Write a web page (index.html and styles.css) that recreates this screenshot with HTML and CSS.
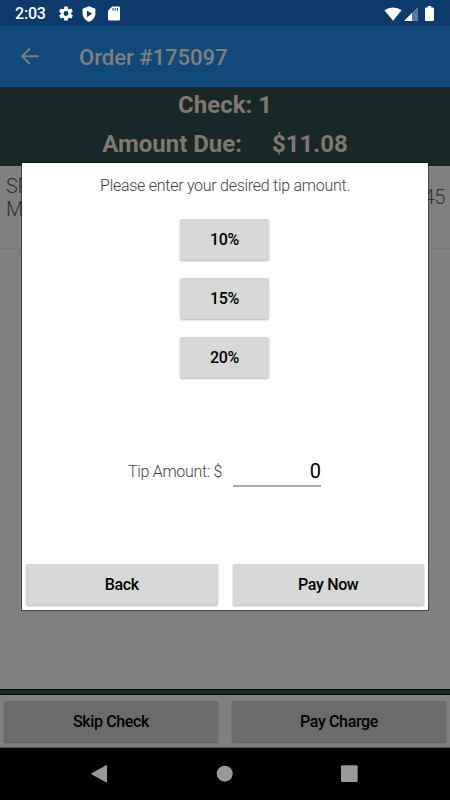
FILE: index.html
```html
<!DOCTYPE html>
<html lang="en">
<head>
<meta charset="utf-8">
<title>Order #175097</title>
<link rel="stylesheet" href="styles.css">
</head>
<body>
<div class="screen">
  <header class="status">
    <span class="clock">2:03</span>
    <svg class="gear" width="14" height="15" viewBox="2 2 20 20"><path fill="#fff" d="M19.43 12.98c.04-.32.07-.64.07-.98s-.03-.66-.07-.98l2.11-1.65c.19-.15.24-.42.12-.64l-2-3.46c-.12-.22-.39-.3-.61-.22l-2.49 1c-.52-.4-1.08-.73-1.69-.98l-.38-2.65C14.46 2.18 14.25 2 14 2h-4c-.25 0-.46.18-.49.42l-.38 2.65c-.61.25-1.17.59-1.69.98l-2.49-1c-.23-.09-.49 0-.61.22l-2 3.46c-.13.22-.07.49.12.64l2.11 1.65c-.04.32-.07.65-.07.98s.03.66.07.98l-2.11 1.65c-.19.15-.24.42-.12.64l2 3.46c.12.22.39.3.61.22l2.49-1c.52.4 1.08.73 1.69.98l.38 2.65c.03.24.24.42.49.42h4c.25 0 .46-.18.49-.42l.38-2.65c.61-.25 1.17-.59 1.69-.98l2.49 1c.23.09.49 0 .61-.22l2-3.46c.12-.22.07-.49-.12-.64zM12 15.500a3.500 3.500 0 1 1 0-7 3.500 3.500 0 0 1 0 7z"/></svg>
    <svg class="shield" width="14" height="16" viewBox="0 0 14 16"><path fill="#fff" fill-rule="evenodd" d="M7 .3 13.4 2.8V7.5C13.4 11.300 10.700 14.500 7 15.700 3.300 14.500.600 11.300.600 7.500V2.800zM5 4.700V11L10.200 7.850z"/></svg>
    <svg class="sd" width="12" height="15" viewBox="0 0 12 15"><path fill="#fff" d="M4.200.500H10.800Q12 .500 12 1.700V13.300Q12 14.500 10.800 14.500H1.200Q0 14.500 0 13.300V4.700z"/><path stroke="#0b3a6b" stroke-width="1" d="M5 2V4.600M7.200 2V4.600M9.400 2V4.600"/></svg>
    <span class="grow"></span>
    <svg class="wifi" width="18" height="14" viewBox="0 0 18 14"><path fill="#fff" d="M.400 3.300Q4 .400 9 .400T17.600 3.300L9 13.700z"/></svg>
    <svg class="signal" width="14" height="14" viewBox="0 0 14 14"><path fill="#58799b" d="M14 0V14H0z"/><path fill="#fff" d="M8 6V14H0z"/></svg>
    <svg class="battery" width="9" height="15" viewBox="0 0 9 15"><path fill="#fff" d="M2.700 0H6.300V1.400H8Q9 1.400 9 2.400V14Q9 15 8 15H1Q0 15 0 14V2.400Q0 1.400 1 1.400H2.700z"/></svg>
  </header>
  <div class="toolbar">
    <svg width="19" height="18" viewBox="-.7 -.3 19 18"><path fill="none" stroke="#808080" stroke-width="1.900" d="M17.800 9H2M9.300 1.100 1.400 9 9.300 16.900"/></svg>
    <h1>Order #175097</h1>
  </div>
  <div class="summary">
    <div class="check">Check: 1</div>
    <div class="due"><span>Amount Due:</span><span>$11.08</span></div>
  </div>
  <main class="list">
    <div class="item"><div>SP<br>M</div><div class="price">45</div></div>
  </main>
  <div class="rule"></div>
  <footer class="actions"><button>Skip Check</button><button>Pay Charge</button></footer>
  <nav class="nav">
    <svg width="450" height="52" viewBox="0 0 450 52"><g fill="#999"><path d="M105.500 17.500Q107 16.700 107 18.200V33.500Q107 34.900 105.500 34L91.800 26.500Q91 25.800 91.800 25.200z"/><circle cx="224.700" cy="25.700" r="8"/><rect x="341" y="17.300" width="16.700" height="16.700" rx="1.200"/></g></svg>
  </nav>
  <section class="dialog">
    <p class="prompt">Please enter your desired tip amount.</p>
    <div class="tips"><button>10%</button><button>15%</button><button>20%</button></div>
    <div class="tip-row"><span>Tip Amount: $</span><span class="field">0</span></div>
    <div class="choices"><button>Back</button><button>Pay Now</button></div>
  </section>
</div>
</body>
</html>
```
FILE: styles.css
```css
* { box-sizing: border-box; }
body { margin: 0; font-family: Roboto, "Liberation Sans", sans-serif; }
.screen { position: relative; width: 450px; height: 800px; overflow: hidden; display: flex; flex-direction: column; background: #808080; }
svg { display: block; flex: none; }
.status { height: 26px; flex: none; display: flex; align-items: center; padding: 1px 16px 0 15px; background: #0b3a6b; color: #fff; }
.clock { width: 43px; font-size: 16px; font-weight: 500; line-height: 26px; letter-spacing: -.2px; }
.gear { margin-left: 1px; }
.shield { margin-left: 9px; }
.sd { margin-left: 12px; }
.grow { flex: 1; }
.wifi { margin-right: 1px; }
.signal { margin: 0 7px 0 1px; }
.toolbar { height: 62px; flex: none; display: flex; align-items: center; padding: 0 0 1px 20px; background: #114a78; border-bottom: 1px solid #182727; color: #808080; }
.toolbar h1 { margin: 3px 0 0 40px; font-size: 22px; font-weight: 500; line-height: 28px; }
.summary { height: 78px; flex: none; background: #182727; color: #80776e; font-size: 24px; font-weight: 700; text-align: center; }
.check { height: 39px; line-height: 34px; }
.due { display: flex; justify-content: center; gap: 30px; line-height: 34px; }
.list { flex: 1; }
.item { height: 83px; display: flex; justify-content: space-between; padding: 9px 5px 0 6px; border-bottom: 1px solid #777; color: #303030; font-size: 20px; font-weight: 300; line-height: 23px; letter-spacing: -.3px; }
.price { padding-top: 11px; }
.rule { height: 6px; flex: none; background: #182727; border-top: 1px solid #000; border-bottom: 1px solid #000; }
button { height: 41px; margin: 0; padding: 0; border: 0; border-radius: 2px; background: #d6d8d7; color: #000; font: 500 16px/41px Roboto, sans-serif; letter-spacing: -.35px; box-shadow: 0 1px 2px rgba(0, 0, 0, .3); }
.actions { height: 53px; flex: none; display: flex; gap: 14px; padding: 6px 4px 0; border-bottom: 1px solid #555; }
.actions button { flex: 1; background: #6b6b6b; }
.nav { height: 52px; flex: none; background: #000; }
.dialog { position: absolute; left: 22px; top: 163px; width: 406px; height: 447px; display: flex; flex-direction: column; background: #fff; box-shadow: 0 0 0 1px rgba(0, 0, 0, .45); color: #444; }
.prompt { margin: 12px 0 0; height: 44px; font-size: 16px; font-weight: 300; line-height: 22px; letter-spacing: -.27px; text-align: center; }
.tips { display: flex; flex-direction: column; align-items: center; gap: 18px; padding-right: 1px; }
.tips button { width: 89px; }
.tip-row { display: flex; justify-content: center; margin-top: 79px; height: 30px; font-size: 16px; font-weight: 300; line-height: 29px; letter-spacing: -.3px; padding-right: 1px; }
.field { width: 88px; margin-left: 11px; border-bottom: 2px solid #aaa; color: #000; font-size: 20px; font-weight: 400; line-height: 28px; letter-spacing: 0; text-align: right; }
.choices { margin-top: auto; display: flex; gap: 15px; padding: 0 4px 5px; }
.choices button { flex: 1; }
```
